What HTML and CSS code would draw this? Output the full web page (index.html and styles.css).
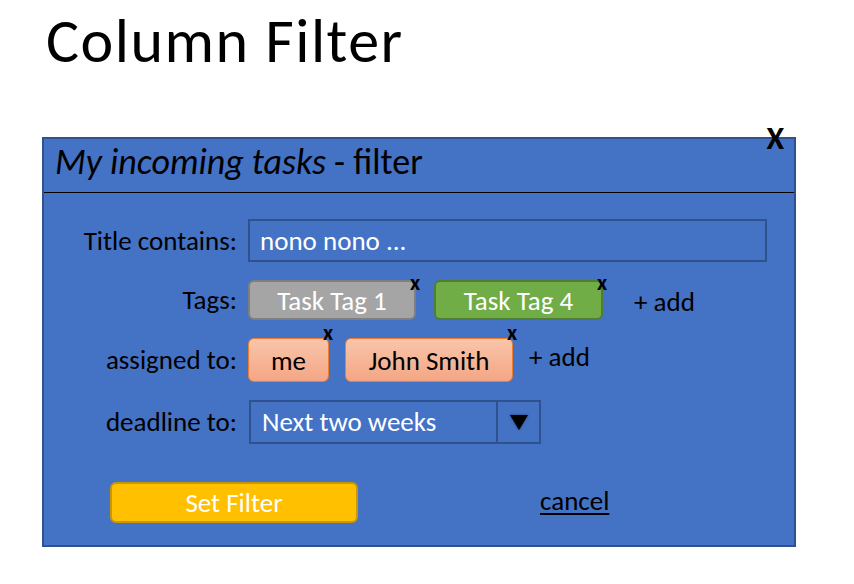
FILE: index.html
```html
<!DOCTYPE html>
<html lang="en">
<head>
<meta charset="utf-8">
<title>Column Filter</title>
<link rel="stylesheet" href="styles.css">
</head>
<body>
<h1 class="page-title">Column Filter</h1>
<div class="dialog">
  <span class="close">X</span>
  <div class="dialog-header"><em>My incoming tasks</em> - filter</div>
  <div class="dialog-body">
    <div class="form">
      <div class="label">Title contains:</div>
      <div class="field"><div class="input">nono nono ...</div></div>

      <div class="label">Tags:</div>
      <div class="field">
        <span class="chip chip-gray w-tag1">Task Tag 1<span class="chip-x">x</span></span>
        <span class="chip chip-green w-tag4">Task Tag 4<span class="chip-x">x</span></span>
        <span class="add add-tags">+ add</span>
      </div>

      <div class="label">assigned to:</div>
      <div class="field">
        <span class="chip chip-salmon w-me">me<span class="chip-x">x</span></span>
        <span class="chip chip-salmon w-john">John Smith<span class="chip-x">x</span></span>
        <span class="add add-people">+ add</span>
      </div>

      <div class="label">deadline to:</div>
      <div class="field">
        <div class="select">
          <span class="select-value">Next two weeks</span>
          <span class="select-btn"><span class="tri"></span></span>
        </div>
      </div>
    </div>
    <div class="actions">
      <button class="btn-set">Set Filter</button>
      <a class="cancel" href="#">cancel</a>
    </div>
  </div>
</div>
</body>
</html>
```

FILE: styles.css
```css
* { box-sizing: border-box; }

body {
  margin: 0;
  background: #ffffff;
  font-family: Carlito, Lato, "Liberation Sans", sans-serif;
  color: #000;
}

.page-title {
  margin: 0;
  height: 72px;
  padding: 10px 0 0 46px;
  font-size: 62px;
  line-height: 62px;
  font-weight: 300;
  letter-spacing: 1.5px;
}

.dialog {
  position: relative;
  margin: 65px 0 0 42px;
  width: 754px;
  background: #4472C4;
  border: 2px solid #2F528F;
}

.close {
  position: absolute;
  right: 10px;
  top: -16px;
  font-size: 32px;
  line-height: 32px;
  font-weight: 700;
}

.dialog-header {
  height: 54px;
  line-height: 47px;
  padding-left: 11px;
  border-bottom: 1px solid #000;
  font-size: 36px;
}

.dialog-body {
  padding: 26px 0 22px 0;
}

.form {
  display: grid;
  grid-template-columns: 193px 1fr;
  column-gap: 11px;
  row-gap: 18px;
  align-items: center;
}

.label {
  text-align: right;
  font-size: 27px;
  line-height: 32px;
}

.label-wide { letter-spacing: 0.3px; }

.field {
  display: flex;
  align-items: center;
}

.input {
  width: 519px;
  height: 43px;
  border: 2px solid #2F528F;
  padding-left: 10px;
  color: #fff;
  font-size: 27px;
  line-height: 39px;
}

.chip {
  position: relative;
  display: inline-flex;
  align-items: center;
  justify-content: center;
  font-size: 27px;
  border-radius: 6px;
  border: 2px solid;
}

.chip-gray { background: #A5A5A5; border-color: #7F7F7F; color: #fff; height: 40px; }
.chip-green { background: #70AD47; border-color: #507E32; color: #fff; height: 40px; }
.chip-salmon {
  background: linear-gradient(#F9C5AB, #F4A684);
  border-color: #ED7D31;
  color: #000;
  height: 44px;
  border-width: 1px;
}

.w-tag1 { width: 168px; }
.w-tag4 { width: 169px; margin-left: 18px; }
.w-me { width: 81px; }
.w-john { width: 168px; margin-left: 16px; }

.chip-x {
  position: absolute;
  right: -6px;
  top: -10px;
  font-size: 22px;
  line-height: 22px;
  font-weight: 700;
  color: #000;
}

.chip-salmon .chip-x { top: -17px; right: -5px; }

.add {
  font-size: 27px;
  line-height: 32px;
}
.add-tags { margin-left: 31px; margin-top: 4px; }
.add-people { margin-left: 16px; margin-top: -6px; }

.select {
  display: flex;
  width: 292px;
  height: 44px;
  border: 2px solid #2F528F;
  margin-left: 1px;
}

.select-value {
  flex: 1;
  padding-left: 11px;
  color: #fff;
  font-size: 27px;
  line-height: 40px;
  border-right: 2px solid #2F528F;
}

.select-btn {
  width: 41px;
  display: flex;
  align-items: center;
  justify-content: center;
}

.tri {
  width: 0;
  height: 0;
  border-left: 9px solid transparent;
  border-right: 9px solid transparent;
  border-top: 15px solid #000;
  filter: drop-shadow(0 0 1px #1F3864);
}

.actions {
  display: flex;
  align-items: center;
  margin-top: 38px;
  padding-left: 66px;
}

.btn-set {
  width: 248px;
  height: 41px;
  background: #FFC000;
  border: 2px solid #C99700;
  border-radius: 6px;
  color: #fff;
  font-family: inherit;
  font-size: 27px;
  padding: 0;
}

.cancel {
  margin-left: 182px;
  margin-top: -4px;
  color: #000;
  font-size: 27px;
  text-decoration: underline;
  text-underline-offset: 3px;
}
```
